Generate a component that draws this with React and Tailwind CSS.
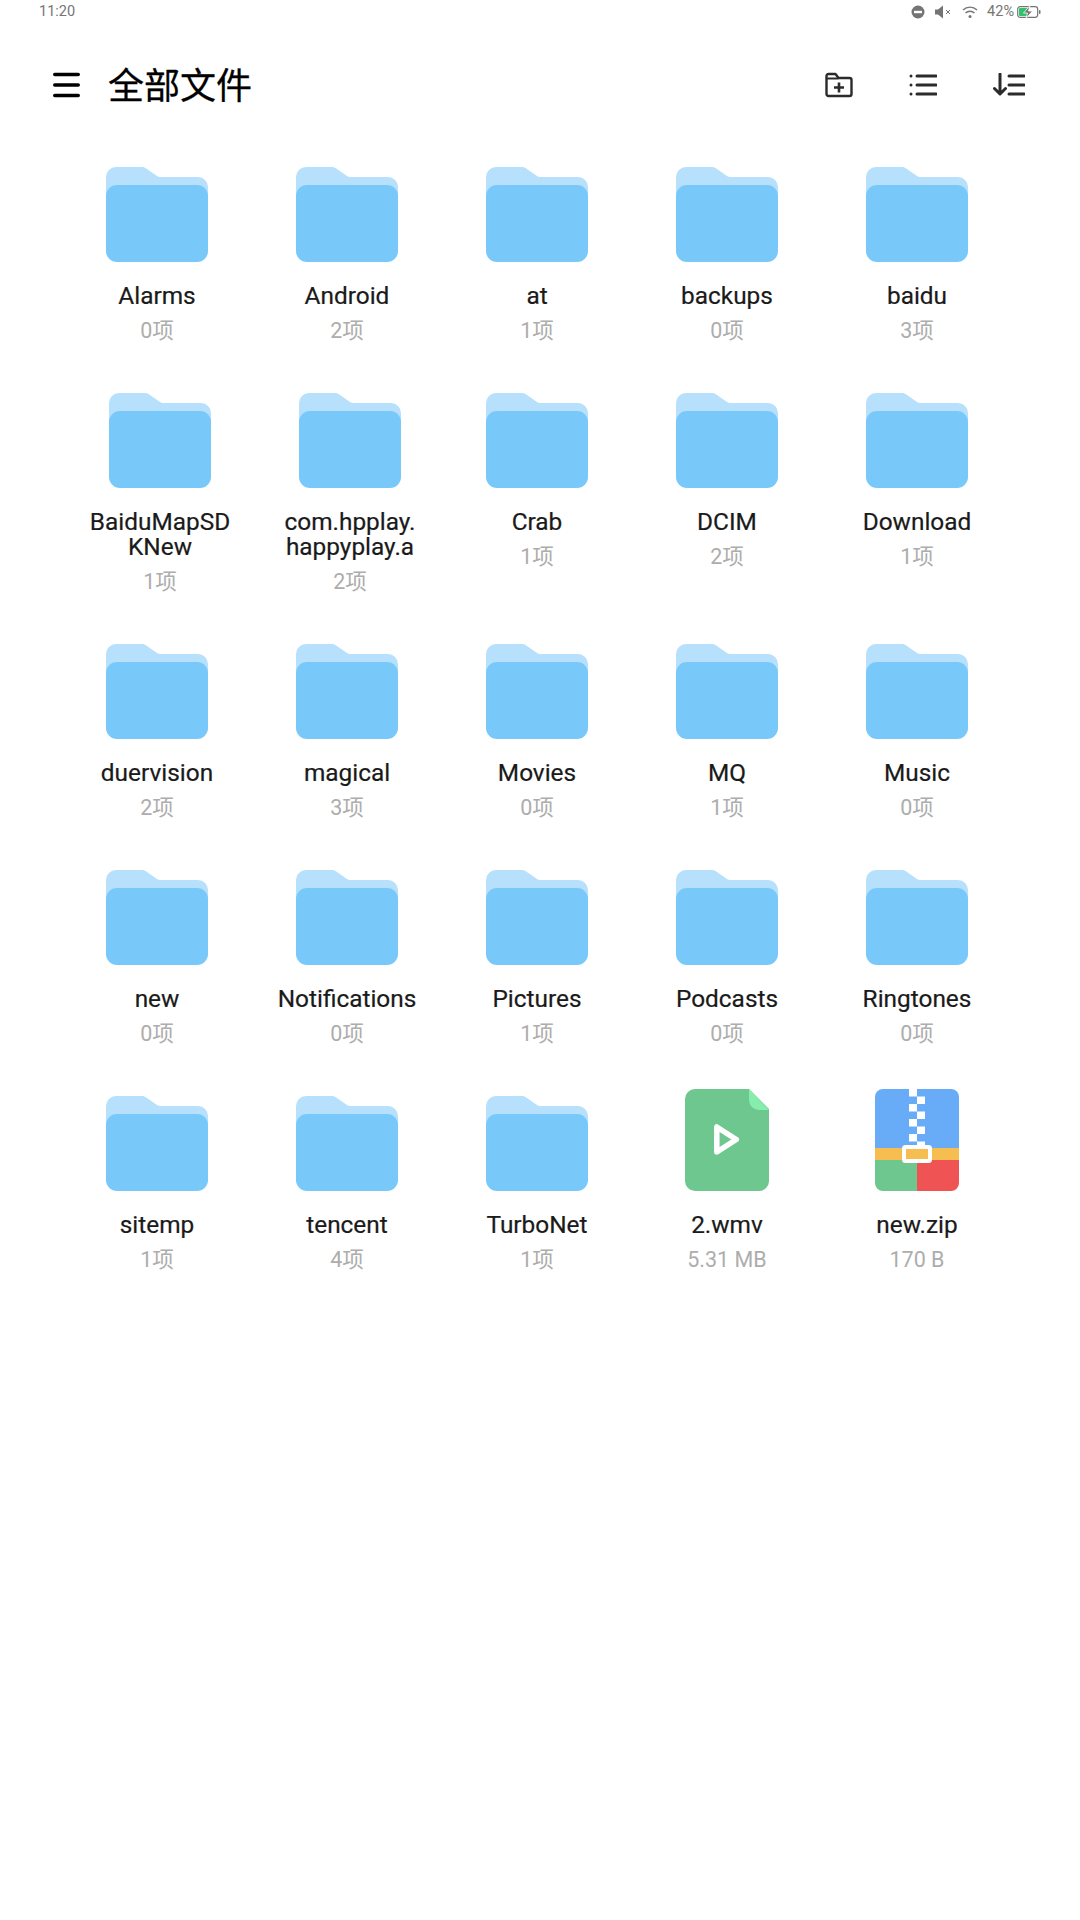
import { useState } from "react";

const items = [
  { name: "Alarms", sub: "0项" },
  { name: "Android", sub: "2项" },
  { name: "at", sub: "1项" },
  { name: "backups", sub: "0项" },
  { name: "baidu", sub: "3项" },
  { name: "BaiduMapSD KNew", sub: "1项", shift: true },
  { name: "com.hpplay. happyplay.a", sub: "2项", shift: true },
  { name: "Crab", sub: "1项" },
  { name: "DCIM", sub: "2项" },
  { name: "Download", sub: "1项" },
  { name: "duervision", sub: "2项" },
  { name: "magical", sub: "3项" },
  { name: "Movies", sub: "0项" },
  { name: "MQ", sub: "1项" },
  { name: "Music", sub: "0项" },
  { name: "new", sub: "0项" },
  { name: "Notifications", sub: "0项" },
  { name: "Pictures", sub: "1项" },
  { name: "Podcasts", sub: "0项" },
  { name: "Ringtones", sub: "0项" },
  { name: "sitemp", sub: "1项" },
  { name: "tencent", sub: "4项" },
  { name: "TurboNet", sub: "1项" },
  { name: "2.wmv", sub: "5.31 MB", kind: "video" },
  { name: "new.zip", sub: "170 B", kind: "zip" },
];

const FolderIcon = () => (
  <svg width="102" height="102" viewBox="0 0 102 102">
    <path
      d="M0 17a10 10 0 0 1 10-10h26q2 0 3.500 1l11.500 8q1.500 1 3 1h38a10 10 0 0 1 10 10v30H0z"
      fill="#b6e0fb"
    />
    <rect x="0" y="25" width="102" height="77" rx="11" fill="#79c8fa" />
  </svg>
);

const VideoIcon = () => (
  <svg width="84" height="102" viewBox="0 0 84 102">
    <path d="M10 0h54l20 20v72a10 10 0 0 1-10 10H10a10 10 0 0 1-10-10V10A10 10 0 0 1 10 0z" fill="#6dc78f" />
    <path d="M64 0l20 21H74a10 10 0 0 1-10-10z" fill="#86edae" />
    <path d="M31.800 38v25l19.500-12.500z" fill="none" stroke="#fff" strokeWidth="5.500" strokeLinejoin="round" />
  </svg>
);

const ZipIcon = () => (
  <svg width="84" height="102" viewBox="0 0 84 102">
    <defs>
      <clipPath id="zipclip">
        <rect width="84" height="102" rx="8" />
      </clipPath>
    </defs>
    <g clipPath="url(#zipclip)">
      <rect width="84" height="59" fill="#68abf6" />
      <rect y="59" width="84" height="12" fill="#f6bd50" />
      <rect y="71" width="42" height="31" fill="#6dc78f" />
      <rect x="42" y="71" width="42" height="31" fill="#f05353" />
      <path
        d="M34 0h8v7.500h-8zM42 7.500h8v7.500h-8zM34 15h8v7.500h-8zM42 22.500h8v7.500h-8zM34 30h8v7.500h-8zM42 37.500h8v7.500h-8zM34 45h8v7.500h-8zM42 52.500h8v4h-8z"
        fill="#fff"
      />
      <rect x="29" y="58" width="26" height="14" rx="1.500" fill="#f6bd50" stroke="#fff" strokeWidth="4" />
    </g>
  </svg>
);

const FileCell = ({ item }) => (
  <div className={`flex flex-col items-center ${item.shift ? "pl-[6px]" : ""}`}>
    {item.kind === "video" ? <VideoIcon /> : item.kind === "zip" ? <ZipIcon /> : <FolderIcon />}
    <div className="mt-[20.500px] w-[150px] text-center text-[24.400px] leading-[25px] text-[#1a1a1a] font-[Roboto,sans-serif] break-words [-webkit-text-stroke:0.2px_#1a1a1a]">
      {item.name}
    </div>
    <div className="mt-[10.500px] text-[21.500px] leading-[25px] text-[#adadad] font-['Roboto','Noto_Sans_CJK_SC',sans-serif]">
      {item.sub}
    </div>
  </div>
);

export default function App() {
  const [files] = useState(items);
  return (
    <div className="w-[1080px] h-[1920px] bg-white font-[Roboto,sans-serif]">
      {/* status bar */}
      <div className="flex items-center justify-between h-[24px] pl-[39px] pr-[39px] text-[14.500px] text-[#757575]">
        <span>11:20</span>
        <div className="flex items-center">
          <svg width="14" height="14" viewBox="0 0 14 14" className="mr-[10px]">
            <circle cx="7" cy="7" r="6.500" fill="#757575" />
            <rect x="3" y="5.800" width="8" height="2.400" fill="#fff" />
          </svg>
          <svg width="16" height="14" viewBox="0 0 16 14" className="mr-[11px]">
            <path d="M0 4.500h3l5-4v13l-5-4H0z" fill="#757575" />
            <path d="M11 5l4 4M15 5l-4 4" stroke="#757575" strokeWidth="1" />
          </svg>
          <svg width="16" height="14" viewBox="0 0 16 14" className="mr-[9px]">
            <path d="M1 5a10 10 0 0 1 14 0M3.500 8a6.500 6.500 0 0 1 9 0" fill="none" stroke="#757575" strokeWidth="1.400" />
            <circle cx="8" cy="11.500" r="1.500" fill="#757575" />
          </svg>
          <span className="mr-[3px]">42%</span>
          <svg width="24" height="14" viewBox="0 0 24 14">
            <rect x="0.700" y="1.700" width="20" height="10.600" rx="2.500" fill="none" stroke="#757575" strokeWidth="1.200" />
            <rect x="2" y="3" width="8.500" height="8" rx="1" fill="#2fc36b" />
            <path d="M13 0.500l-6.500 7.500h4l-1.500 5.500 6.500-7.500h-4z" fill="#757575" stroke="#fff" strokeWidth="0.800" />
            <rect x="22" y="5" width="1.500" height="4" rx="0.700" fill="#757575" />
          </svg>
        </div>
      </div>

      {/* toolbar */}
      <div className="flex items-center justify-between h-[84px] mt-[19px] pl-[53px] pr-[55px]">
        <div className="flex items-center">
          <svg width="28" height="26" viewBox="0 0 28 26">
            <path d="M1.800 2.500h23.400M1.800 13h23.400M1.800 23.500h23.400" stroke="#000" strokeWidth="3.600" strokeLinecap="round" />
          </svg>
          <h1 className="ml-[27px] mb-[5px] text-[36px] font-normal text-black font-['Noto_Sans_CJK_SC',sans-serif] [-webkit-text-stroke:0.3px_#000]">
            全部文件
          </h1>
        </div>
        <div className="flex items-center gap-[56px]">
          <svg width="28" height="26" viewBox="0 0 28 26">
            <path
              d="M1.500 4a2 2 0 0 1 2-2h7l3 4h11a2 2 0 0 1 2 2v14a2 2 0 0 1-2 2h-21a2 2 0 0 1-2-2z"
              fill="none"
              stroke="#2b2b2b"
              strokeWidth="2.400"
              strokeLinejoin="round"
            />
            <path d="M1.500 6.500h12" stroke="#2b2b2b" strokeWidth="2" />
            <path d="M9 15.500h10M14 10.500v10" stroke="#2b2b2b" strokeWidth="2.600" />
          </svg>
          <svg width="28" height="24" viewBox="0 0 28 24">
            <path d="M8 3h19M8 12h19M8 21h19" stroke="#2b2b2b" strokeWidth="3" strokeLinecap="round" />
            <circle cx="2" cy="3" r="1.500" fill="#2b2b2b" />
            <circle cx="2" cy="12" r="1.500" fill="#2b2b2b" />
            <circle cx="2" cy="21" r="1.500" fill="#2b2b2b" />
          </svg>
          <svg width="32" height="24" viewBox="0 0 32 24">
            <path d="M7 1v20M1.500 15.500L7 21l5.500-5.500" fill="none" stroke="#2b2b2b" strokeWidth="3" strokeLinecap="round" strokeLinejoin="round" />
            <path d="M16 3h15M16 12h15M16 21h15" stroke="#2b2b2b" strokeWidth="3" strokeLinecap="round" />
          </svg>
        </div>
      </div>

      {/* files */}
      <div className="grid grid-cols-[repeat(5,190px)] gap-y-[43px] pl-[62px] mt-[33px]">
        {files.map((item) => (
          <FileCell key={item.name} item={item} />
        ))}
      </div>
    </div>
  );
}
